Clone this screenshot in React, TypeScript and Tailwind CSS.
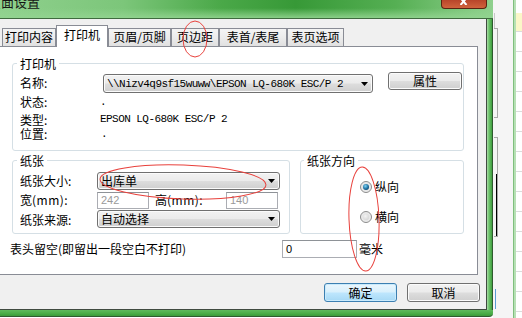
import React from 'react';

const gray =
  'rounded-[3px] border border-[#707070] bg-[linear-gradient(180deg,#f2f2f2_0%,#ebebeb_48%,#dddddd_52%,#cfcfcf_100%)] shadow-[inset_0_0_0_1px_#fbfbfb]';

const Combo = ({ className, text, textClass }: { className: string; text: string; textClass?: string }) => (
  <div className={`flex items-center pl-[3px] pr-[4px] ${gray} ${className}`}>
    <span className={`flex-1 whitespace-nowrap overflow-hidden ${textClass ?? ''}`}>{text}</span>
    <svg width="7" height="4" viewBox="0 0 7 4" className="shrink-0">
      <path d="M0 0H7L3.5 4Z" fill="#000" />
    </svg>
  </div>
);

const Radio = ({ checked, label, className }: { checked?: boolean; label: string; className: string }) => (
  <div className={`flex items-center h-[12px] ${className}`}>
    <div className="w-[12px] h-[12px] rounded-full border border-[#8c8c8c] bg-[radial-gradient(circle,#d8d8d8_0%,#f6f6f6_100%)] flex items-center justify-center">
      {checked ? (
        <div className="w-[6px] h-[6px] rounded-full bg-[radial-gradient(circle_at_40%_35%,#7fd4f5_0%,#1a6b9c_55%,#0b2f4c_100%)]" />
      ) : (
        <div className="w-[6px] h-[6px] rounded-full bg-[radial-gradient(circle_at_40%_35%,#f4f4f4_0%,#cfcfcf_100%)]" />
      )}
    </div>
    <span className="ml-[3px] leading-[16px]">{label}</span>
  </div>
);

const tabs = [
  { t: '打印内容', w: 'w-[54px]' },
  { t: '打印机', w: 'w-[52px]', on: true },
  { t: '页眉/页脚', w: 'w-[63px]' },
  { t: '页边距', w: 'w-[48px]' },
  { t: '表首/表尾', w: 'w-[68px]' },
  { t: '表页选项', w: 'w-[57px]' },
];

const mono = "font-['Liberation_Mono',monospace] text-[11px] tracking-[-0.55px]";
const latin = "font-['Liberation_Sans',sans-serif] text-[11px]";

export default function App() {
  return (
    <div className="relative w-[522px] h-[318px] overflow-hidden flex bg-white font-['Noto_Sans_CJK_SC',sans-serif] text-[12px] leading-[16px] text-black">
      {/* dialog with its green frame */}
      <div className="w-[493px] shrink-0 flex flex-col">
        <div className="h-[19px] flex items-start border-b border-[#3f6b3f] bg-[linear-gradient(180deg,rgba(160,220,158,0)_0%,rgba(150,214,148,0)_45%,rgba(146,212,144,0.9)_100%),linear-gradient(90deg,#8fd08d_0%,#7cc67a_25%,#4aa848_45%,#379937_60%,#55af53_80%,#8fd08d_100%)]">
          <span className="-ml-[12px] -mt-[5px] leading-[14px] text-[13px] text-[#151515]">页面设置</span>
          <div className="ml-auto mr-[6px] w-[46px] h-[9px] rounded-b-[4px] border border-t-0 border-[#5a2412] bg-[linear-gradient(180deg,#b8452a_0%,#d0633c_100%)] flex justify-center">
            <svg width="8" height="5" viewBox="0 0 8 5">
              <path d="M0.5 -2L6.5 5M6.5 -2L0.5 5" stroke="#fff" strokeWidth="2" />
            </svg>
          </div>
        </div>

        <div className="flex">
          <div className="w-[487px] h-[291px] border-r border-b border-[#404a40] bg-[#f0f0f0] pt-[6px] flex flex-col">
            {/* tabs */}
            <div className="h-[21px] flex items-end pl-[2px]">
              {tabs.map((tab) =>
                tab.on ? (
                  <div
                    key={tab.t}
                    className={`${tab.w} relative z-10 h-[22px] -mb-px border border-b-0 border-[#898c95] bg-white flex justify-center pt-[1px]`}
                  >
                    {tab.t}
                  </div>
                ) : (
                  <div
                    key={tab.t}
                    className={`${tab.w} h-[18px] border border-b-0 border-[#898c95] bg-[linear-gradient(180deg,#f4f4f4_0%,#ececec_50%,#e0e0e0_100%)] flex justify-center`}
                  >
                    {tab.t}
                  </div>
                ),
              )}
            </div>

            {/* tab panel */}
            <div className="w-[478px] h-[229px] border border-l-0 border-[#898c95] bg-white flex flex-col">
              <fieldset className="mt-[8px] ml-[12px] w-[452px] rounded-[3px] border border-[#d5dfe5] pb-[9px]">
                <legend className="ml-[4px] px-[3px] leading-[17px]">打印机</legend>
                <div className="flex items-start h-[21px] pl-[7px]">
                  <span className="w-[83px] mt-[3px]">名称:</span>
                  <Combo
                    className="w-[270px] h-[19px] mt-[2px]"
                    text="\\Nizv4q9sf15wuww\EPSON LQ-680K ESC/P 2"
                    textClass={mono}
                  />
                  <button className={`ml-[15px] w-[74px] h-[18px] leading-[14px] ${gray}`}>属性</button>
                </div>
                <div className="flex items-center h-[18px] pl-[7px]">
                  <span className="w-[80px]">状态:</span>
                  <span className={mono}>.</span>
                </div>
                <div className="flex items-center h-[16px] pl-[7px] leading-[15px]">
                  <span className="w-[80px]">类型:</span>
                  <span className={mono}>EPSON LQ-680K ESC/P 2</span>
                </div>
                <div className="flex items-center h-[14px] pl-[7px] leading-[14px]">
                  <span className="w-[81px]">位置:</span>
                  <span className={mono}>.</span>
                </div>
              </fieldset>

              <div className="flex mt-[1px]">
                <fieldset className="ml-[12px] w-[278px] rounded-[3px] border border-[#d5dfe5] pb-[4px]">
                  <legend className="ml-[4px] px-[3px] leading-[17px]">纸张</legend>
                  <div className="flex items-start h-[22px] pl-[7px]">
                    <span className="w-[77px] mt-[4px]">纸张大小:</span>
                    <Combo className="w-[183px] h-[18px] mt-[3px]" text="出库单" />
                  </div>
                  <div className="flex items-start h-[18px] pl-[7px]">
                    <span className="w-[77px] mt-[1px]">
                      宽<span className="tracking-[0.5px]">(mm):</span>
                    </span>
                    <div className={`w-[52px] h-[17px] mt-[1px] border border-[#abadb3] border-t-[#8e9297] bg-white pl-[3px] leading-[15px] text-[#9a9a9a] ${latin}`}>
                      242
                    </div>
                    <span className="ml-[6px] w-[71px] mt-[1px]">
                      高<span className="tracking-[0.5px]">(mm):</span>
                    </span>
                    <div className={`w-[52px] h-[17px] mt-[1px] border border-[#abadb3] border-t-[#8e9297] bg-white pl-[3px] leading-[15px] text-[#9a9a9a] ${latin}`}>
                      140
                    </div>
                  </div>
                  <div className="flex items-start h-[20px] pl-[7px]">
                    <span className="w-[77px] mt-[3px]">纸张来源:</span>
                    <Combo className="w-[183px] h-[18px] mt-[1px]" text="自动选择" />
                  </div>
                </fieldset>

                <fieldset className="ml-[10px] w-[164px] rounded-[3px] border border-[#d5dfe5]">
                  <legend className="ml-[3px] px-[3px] leading-[17px]">纸张方向</legend>
                  <Radio checked label="纵向" className="ml-[59px] mt-[12px]" />
                  <Radio label="横向" className="ml-[59px] mt-[18px]" />
                </fieldset>
              </div>

              <div className="flex items-center h-[18px] mt-[6px] pl-[10px]">
                <span className="w-[272px]">表头留空(即留出一段空白不打印)</span>
                <div className={`w-[75px] h-[18px] border border-[#abadb3] border-t-[#8e9297] bg-white pl-[3px] leading-[16px] ${latin}`}>0</div>
                <span className="ml-[2px]">毫米</span>
              </div>
            </div>

            {/* dialog buttons */}
            <div className="flex justify-end gap-[10px] mt-[8px] pr-[6px]">
              <button className="w-[73px] h-[19px] leading-[15px] rounded-[3px] border border-[#3c7fb1] bg-[linear-gradient(180deg,#eaf6fd_0%,#d9f0fc_48%,#bee6fd_52%,#a7d9f5_100%)] shadow-[inset_0_0_0_1px_#c9eafc]">
                确定
              </button>
              <button className={`w-[73px] h-[19px] leading-[15px] ${gray}`}>取消</button>
            </div>
          </div>
          <div className="w-[6px] h-[291px] border-r border-[#2f5a2f] bg-[linear-gradient(90deg,#a9dca7_0%,#6cc26a_40%,#3f9f3f_100%)]" />
        </div>
        <div className="h-[7px] border-b border-[#2f5a2f] bg-[linear-gradient(180deg,#5fba5d_0%,#48ac46_60%,#3a9a3a_100%)] rounded-br-[4px]" />
      </div>

      {/* window behind */}
      <div className="flex-1 flex bg-[#f5f5f5]">
        <div className="w-[20px] flex flex-col pt-[13px]">
          <div className="h-[15px] w-[4px] ml-[1px] border-l border-[#c8c8c8]" />
          <div className="h-[90px] w-[4px] ml-[1px] border border-l-0 border-[#a9a9a9]" />
          <div className="h-[100px] w-[4px] ml-[1px] mt-[19px] border border-l-0 border-[#a9a9a9] flex flex-col justify-end">
            <div className="h-[62px] border-r border-black" />
          </div>
          <div className="h-[20px] w-[2px] ml-[1px] mt-[52px] border-r border-[#5b9bd5]" />
        </div>
        <div className="w-[3px] bg-[#b7e0b5] border-l border-[#7fbf7d]" />
        <div className="flex-1 flex flex-col bg-white pt-[13px]">
          <div className="h-[19px] bg-[#fbf7c8] border-b border-[#dcdcdc]" />
          {Array.from({ length: 14 }).map((_, i) => (
            <div key={i} className="h-[20px] border-b border-[#dcdcdc]" />
          ))}
        </div>
      </div>

      {/* red annotation rings */}
      <svg className="absolute inset-0 pointer-events-none" width="522" height="318" viewBox="0 0 522 318">
        <ellipse cx="195" cy="39" rx="12" ry="18" fill="none" stroke="#e8413c" strokeWidth="1" />
        <ellipse cx="183" cy="182" rx="83" ry="17" fill="none" stroke="#e8413c" strokeWidth="1" transform="rotate(2 183 182)" />
        <ellipse cx="364" cy="219" rx="15" ry="52" fill="none" stroke="#e8413c" strokeWidth="1" transform="rotate(-2 364 219)" />
      </svg>
    </div>
  );
}
